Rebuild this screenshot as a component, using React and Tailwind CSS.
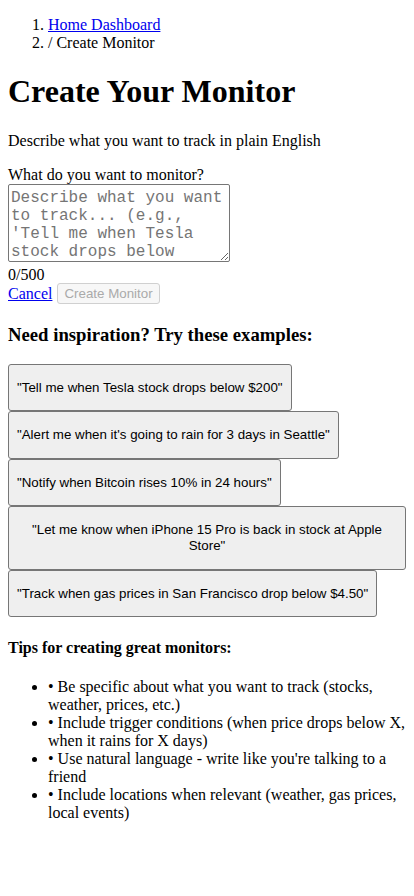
import React from 'react'

const examples = [
  '"Tell me when Tesla stock drops below $200"',
  '"Alert me when it\'s going to rain for 3 days in Seattle"',
  '"Notify when Bitcoin rises 10% in 24 hours"',
  '"Let me know when iPhone 15 Pro is back in stock at Apple Store"',
  '"Track when gas prices in San Francisco drop below $4.50"',
]

const tips = [
  '• Be specific about what you want to track (stocks, weather, prices, etc.)',
  '• Include trigger conditions (when price drops below X, when it rains for X days)',
  "• Use natural language - write like you're talking to a friend",
  '• Include locations when relevant (weather, gas prices, local events)',
]

export default function App() {
  return (
    <div className="px-2 pb-2 pt-px font-['Liberation_Serif',serif] text-base leading-[18px] text-black bg-white min-h-[896px]">
      <nav>
        <ol className="list-decimal pl-10 mt-[15px] mb-4">
          <li>
            <a href="#" className="text-[#0000ee] underline">Home Dashboard</a>
          </li>
          <li>/ Create Monitor</li>
        </ol>
      </nav>

      <h1 className="text-[32px] font-bold leading-[37px] my-[21.44px]">Create Your Monitor</h1>
      <p className="my-4">Describe what you want to track in plain English</p>

      <form onSubmit={(e) => e.preventDefault()}>
        <label htmlFor="query" className="block">What do you want to monitor?</label>
        <textarea
          id="query"
          rows={4}
          placeholder="Describe what you want to track... (e.g., 'Tell me when Tesla stock drops below $200')"
          className="block w-[222px] h-[78px] mb-1 px-[2px] pt-[4px] pb-0 border border-[#767676] rounded-[2px] font-['Liberation_Mono',monospace] text-[16px] leading-[18px] placeholder:text-[#757575] resize"
        />
        <div>0/500</div>
        <div className="flex items-center gap-[5px] h-5">
          <a href="#" className="text-[#0000ee] underline">Cancel</a>
          <button
            type="submit"
            disabled
            className="h-[21px] px-[6px] font-['Liberation_Sans',sans-serif] text-[13.33px] leading-[15px] text-[#aaaaaa] bg-[#f7f7f7] border border-[#d0d0d0] rounded-[3px]"
          >
            Create Monitor
          </button>
        </div>
      </form>

      <h3 className="text-[18.72px] font-bold leading-[21.5px] mt-[19.72px] mb-[18.72px]">Need inspiration? Try these examples:</h3>
      <div className="flex flex-col items-start">
        {examples.map((ex) => (
          <button
            key={ex}
            type="button"
            className="px-2 py-[14.75px] font-['Liberation_Sans',sans-serif] text-[13.33px] leading-4 text-black text-center bg-[#efefef] border border-[#767676] rounded-[3px]"
          >
            {ex}
          </button>
        ))}
      </div>

      <h4 className="font-bold my-[21.28px]">Tips for creating great monitors:</h4>
      <ul className="list-disc pl-10 my-4">
        {tips.map((t) => (
          <li key={t}>{t}</li>
        ))}
      </ul>
    </div>
  )
}
